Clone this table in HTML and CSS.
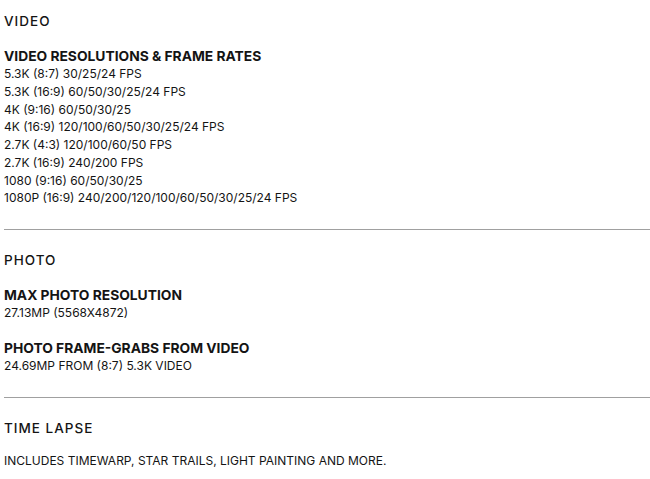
FILE: index.html
```html
<!DOCTYPE html>
<html>
<head>
<meta charset="utf-8">
<link rel="stylesheet" href="styles.css">
</head>
<body>
<div class="specs">
  <section class="section">
    <h2 class="section-title">VIDEO</h2>
    <div class="group">
      <h3 class="group-title">VIDEO RESOLUTIONS &amp; FRAME RATES</h3>
      <ul class="values">
        <li>5.3K (8:7) 30/25/24 FPS</li>
        <li>5.3K (16:9) 60/50/30/25/24 FPS</li>
        <li>4K (9:16) 60/50/30/25</li>
        <li>4K (16:9) 120/100/60/50/30/25/24 FPS</li>
        <li>2.7K (4:3) 120/100/60/50 FPS</li>
        <li>2.7K (16:9) 240/200 FPS</li>
        <li>1080 (9:16) 60/50/30/25</li>
        <li>1080P (16:9) 240/200/120/100/60/50/30/25/24 FPS</li>
      </ul>
    </div>
  </section>
  <hr class="divider">
  <section class="section">
    <h2 class="section-title">PHOTO</h2>
    <div class="group">
      <h3 class="group-title">MAX PHOTO RESOLUTION</h3>
      <ul class="values">
        <li>27.13MP (5568X4872)</li>
      </ul>
    </div>
    <div class="group">
      <h3 class="group-title">PHOTO FRAME-GRABS FROM VIDEO</h3>
      <ul class="values">
        <li>24.69MP FROM (8:7) 5.3K VIDEO</li>
      </ul>
    </div>
  </section>
  <hr class="divider">
  <section class="section">
    <h2 class="section-title">TIME LAPSE</h2>
    <p class="note">INCLUDES TIMEWARP, STAR TRAILS, LIGHT PAINTING AND MORE.</p>
  </section>
</div>
</body>
</html>
```

FILE: styles.css
```css
html, body {
  margin: 0;
  padding: 0;
  background: #ffffff;
}

body {
  font-family: "Inter", "Liberation Sans", Arial, sans-serif;
  color: #141414;
}

.specs {
  padding: 12px 0 0 4px;
}

.section-title {
  margin: 0;
  font-size: 13.5px;
  font-weight: 500;
  letter-spacing: 1px;
  line-height: 18px;
}

.group {
  margin-top: 17px;
}

.group-title {
  margin: 0;
  font-size: 13.8px;
  font-weight: 700;
  line-height: 18px;
}

.values {
  list-style: none;
  margin: 0;
  padding: 0;
  font-size: 12px;
  line-height: 17.75px;
}

.divider {
  border: 0;
  border-top: 1px solid #a0a0a0;
  margin: 22px 0 21px 0;
  height: 0;
}

.note {
  margin: 15px 0 0 0;
  font-size: 12px;
  line-height: 18px;
}
```
